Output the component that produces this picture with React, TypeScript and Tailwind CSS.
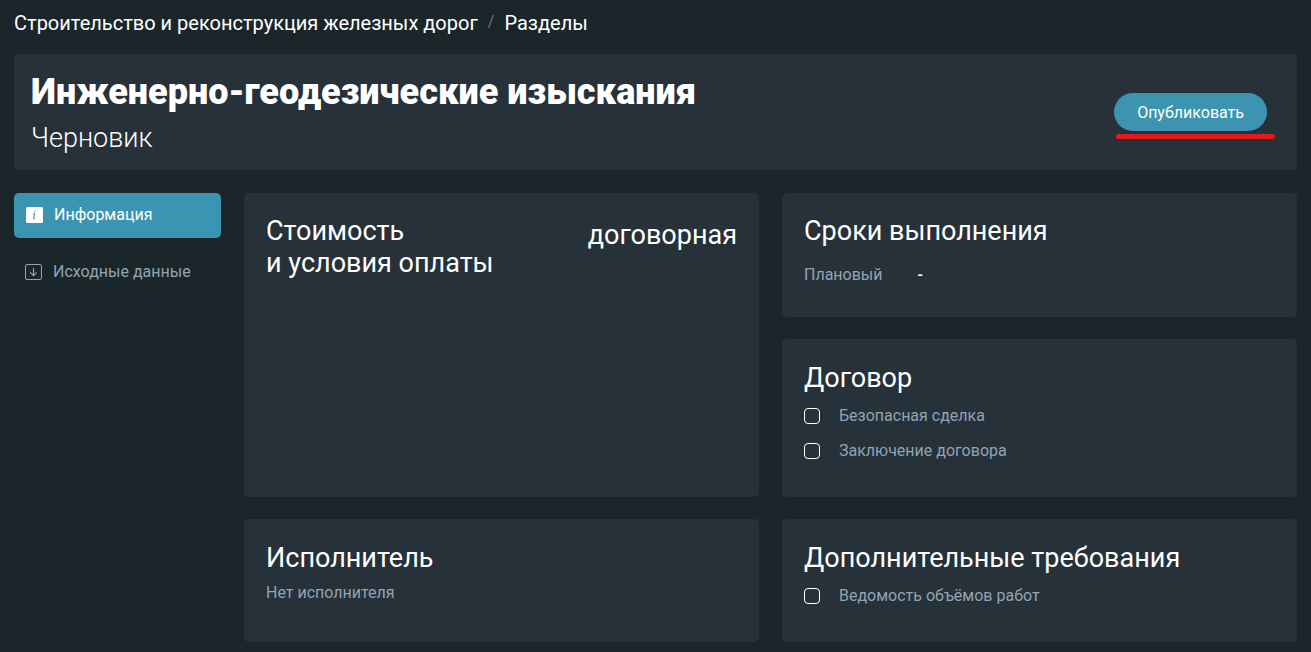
import type { ReactNode } from "react";

function Card({ className = "", children }: { className?: string; children: ReactNode }) {
  return <section className={`rounded-[5px] bg-[#27313a] px-[22px] ${className}`}>{children}</section>;
}

function Heading({ children }: { children: ReactNode }) {
  return <h2 className="text-[27px] leading-8">{children}</h2>;
}

function Check({ label }: { label: string }) {
  return (
    <label className="flex items-center gap-[19px] text-base leading-[19px] text-[#90a4b4]">
      <input
        type="checkbox"
        className="size-4 shrink-0 appearance-none rounded-[4px] border border-white checked:bg-[#3c94b1]"
      />
      {label}
    </label>
  );
}

function InfoIcon() {
  return (
    <svg width="17" height="16" viewBox="0 0 17 16" aria-hidden="true">
      <rect width="17" height="16" rx="1.5" fill="#fff" />
      <path d="M8.9 3.6v1.2M7.3 6.5h1.2l-.8 4.6q0 .9 1.2.5" fill="none" stroke="#3c94b1" strokeWidth="1.1" />
    </svg>
  );
}

function DownloadIcon() {
  return (
    <svg width="17" height="16" viewBox="0 0 17 16" fill="none" stroke="#90a4b4" aria-hidden="true">
      <rect x=".5" y=".5" width="16" height="15" rx="1.5" />
      <path d="M8.5 4v7.5M5.3 8.4l3.2 3.2 3.2-3.2" strokeWidth="1.2" />
    </svg>
  );
}

export default function App() {
  return (
    <div className="min-h-screen bg-[#1b262b] px-3.5 pt-3 pb-2.5 font-['Roboto',sans-serif] text-white">
      <nav aria-label="Навигация" className="flex gap-2.5 text-xl leading-[22px]">
        <a href="#project">Строительство и реконструкция железных дорог</a>
        <span className="text-base leading-5 text-[#66757d]">/</span>
        <a href="#sections">Разделы</a>
      </nav>

      <header className="mt-5 flex items-center justify-between rounded-[5px] bg-[#27313a] py-4 pr-[30px] pl-[17px]">
        <div>
          <h1 className="text-4xl leading-[44px] font-black">Инженерно-геодезические изыскания</h1>
          <p className="mt-2 text-[27px] leading-8 font-light">Черновик</p>
        </div>
        <div className="relative">
          <button type="button" className="block rounded-full bg-[#3c94b1] px-[23px] pt-2.5 pb-2 text-base leading-5">
            Опубликовать
          </button>
          <span className="absolute top-full -right-2 left-0.5 mt-[3px] h-[5px] rounded-full bg-[#e51b1b]" />
        </div>
      </header>

      <div className="mt-[23px] flex gap-[23px]">
        <aside className="w-[207px] shrink-0">
          <ul className="flex flex-col gap-3">
            <li>
              <a href="#info" className="flex h-[45px] items-center gap-[11px] rounded-[5px] bg-[#3c94b1] px-3 pb-0.5">
                <InfoIcon />
                Информация
              </a>
            </li>
            <li>
              <a href="#source" className="flex h-[45px] items-center gap-[11px] px-[11px] pb-0.5 text-[#90a4b4]">
                <DownloadIcon />
                Исходные данные
              </a>
            </li>
          </ul>
        </aside>

        <main className="grid flex-1 grid-cols-2 gap-x-[23px] gap-y-[22px]">
          <Card className="row-span-2 flex items-start justify-between pt-[22px]">
            <Heading>
              Стоимость
              <br />и условия оплаты
            </Heading>
            <span className="mt-1 text-[27px] leading-8">договорная</span>
          </Card>
          <Card className="pt-[22px] pb-[31px]">
            <Heading>Сроки выполнения</Heading>
            <dl className="mt-[17px] flex gap-[35px] leading-[22px]">
              <dt className="text-[#90a4b4]">Плановый</dt>
              <dd className="font-medium">-</dd>
            </dl>
          </Card>
          <Card className="pt-[23px] pb-[37px]">
            <Heading>Договор</Heading>
            <div className="mt-3 flex flex-col gap-4">
              <Check label="Безопасная сделка" />
              <Check label="Заключение договора" />
            </div>
          </Card>
          <Card className="pt-[23px] pb-[37px]">
            <Heading>Исполнитель</Heading>
            <p className="mt-2 leading-[22px] text-[#90a4b4]">Нет исполнителя</p>
          </Card>
          <Card className="pt-[23px] pb-[37px]">
            <Heading>Дополнительные требования</Heading>
            <div className="mt-3">
              <Check label="Ведомость объёмов работ" />
            </div>
          </Card>
        </main>
      </div>
    </div>
  );
}
